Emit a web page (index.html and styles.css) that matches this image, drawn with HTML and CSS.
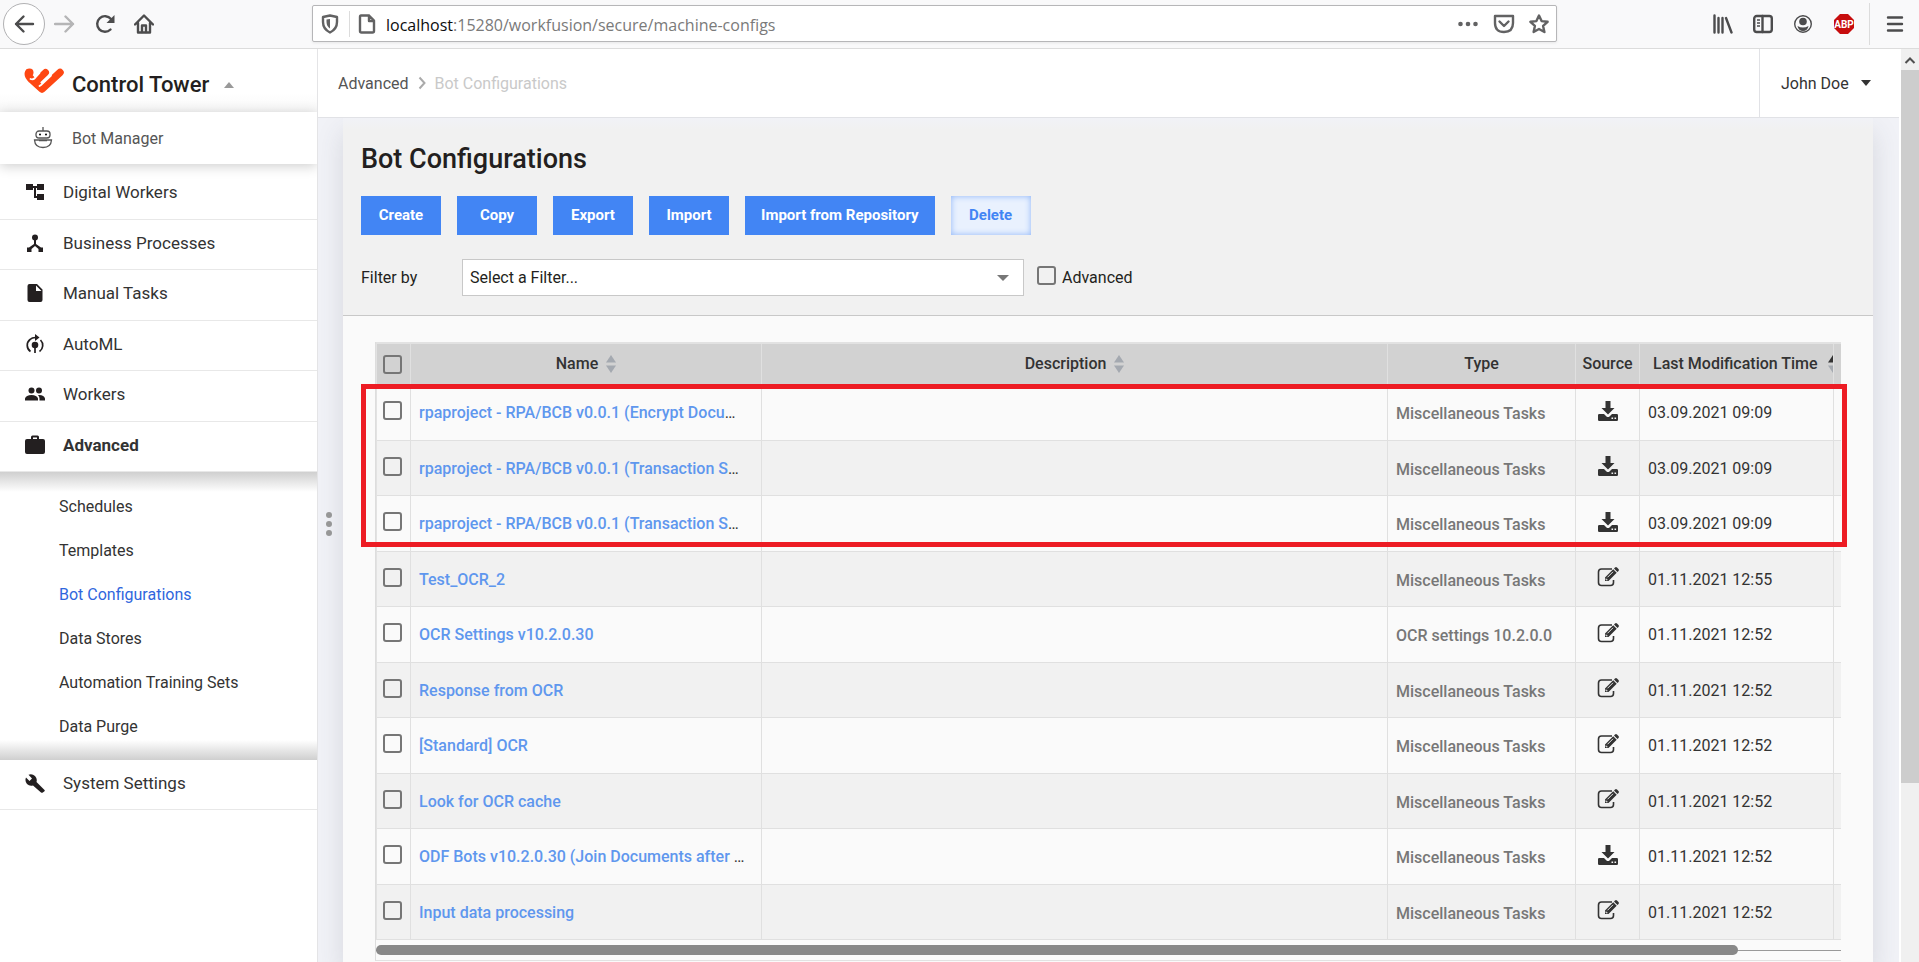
FILE: index.html
```html
<!DOCTYPE html>
<html lang="en">
<head>
<meta charset="utf-8">
<title>Bot Configurations</title>
<link rel="stylesheet" href="styles.css">
</head>
<body>
<svg class="defs" aria-hidden="true">
  <symbol id="i-import" viewBox="0 0 20 20"><path d="M7.500 0h5v7h4L10 13.500 3.500 7h4zM1.200 13H6l2.500 2.500q1.500 1.200 3 0L14 13h4.800q1.200 0 1.200 1.200v4.600q0 1.200-1.200 1.200H1.200Q0 20 0 18.800v-4.600Q0 13 1.200 13zM13.500 16.500v1.600h1.600v-1.600zm3 0v1.600h1.600v-1.600z" fill="currentColor" fill-rule="evenodd"/></symbol>
  <symbol id="i-edit" viewBox="0 0 22 20"><path d="M15 2H4.500Q1.500 2 1.500 5v10.500q0 3 3 3h9q3 0 3-3V13" fill="none" stroke="currentColor" stroke-width="1.600"/><path d="M8 10.500 16.200 2.300l3.500 3.500L11.500 14H8zM17 1.500l1-1q1-.8 2 0l1.500 1.500q.8 1 0 2l-1 1z" fill="currentColor"/><path d="m10.500 10.300 5.500-5.500M9 11.500v1.300h1.500" stroke="#fafafa" fill="none" stroke-width=".9"/></symbol>
  <symbol id="i-sort" viewBox="0 0 10 18"><path d="M5 0l5 7.500H0z" fill="currentColor"/><path d="M5 18l5-7.500H0z" fill="#a4a9b0"/></symbol>
</svg>

<header class="browser">
  <div class="nav-buttons">
    <button class="round" aria-label="Back"><svg width="22" height="20" viewBox="0 0 22 20"><path d="M20 10H3M10.500 2.500 3 10l7.500 7.500" class="ln"/></svg></button>
    <button class="dim" aria-label="Forward"><svg width="22" height="20" viewBox="0 0 22 20"><path d="M1 10h18M11.500 2.500 19 10l-7.500 7.500" class="ln"/></svg></button>
    <button aria-label="Reload"><svg width="20" height="20" viewBox="0 0 20 20"><path d="M15.500 15.500A7.800 7.800 0 1 1 16 5" class="ln"/><path d="M19.500 1v8H11.500z" fill="currentColor"/></svg></button>
    <button aria-label="Home"><svg width="20" height="20" viewBox="0 0 20 20"><path d="M1 10.500 10 1.500l9 9M4 9v9.500h12V9" class="ln"/><path d="M8 18v-6.500h4V18" class="ln"/></svg></button>
  </div>
  <div class="urlbar">
    <svg width="18" height="20" viewBox="0 0 18 20"><path d="M9 1.500 16 3v5q0 7-7 10.500Q2 15 2 8V3z" class="ln"/><path d="M9 5v9.500Q5.500 12 5.500 8V5.500z" fill="currentColor"/></svg>
    <span class="url-sep"></span>
    <svg width="18" height="20" viewBox="0 0 18 20"><path d="M3 1.500h8l5 5v10.500q0 1.500-1.500 1.500H3.500Q2 18.500 2 17V3q0-1.500 1-1.500zM11 1.500V7h5" class="ln"/></svg>
    <div class="url"><b>localhost</b>:15280/workfusion/secure/machine-configs</div>
    <svg width="22" height="20" viewBox="0 0 22 20" fill="currentColor"><circle cx="3.500" cy="10" r="2.300"/><circle cx="11" cy="10" r="2.300"/><circle cx="18.500" cy="10" r="2.300"/></svg>
    <svg width="22" height="20" viewBox="0 0 22 20"><path d="M2 2h18v7q0 9-9 9t-9-9zM6.500 7.500 11 12l4.500-4.500" class="ln"/></svg>
    <svg width="20" height="20" viewBox="0 0 20 20"><path d="m10 1.500 2.600 5.600 6 .7-4.500 4.100 1.300 6.100-5.400-3-5.400 3 1.300-6.100L1.400 7.800l6-.7z" class="ln"/></svg>
  </div>
  <div class="tools">
    <button aria-label="Library"><svg width="20" height="20" viewBox="0 0 20 20"><path d="M1.500 1.500v17M5.500 4v14.500M9.500 4v14.500M13 4l5.500 14.500" class="ln"/></svg></button>
    <button aria-label="Sidebars"><svg width="20" height="20" viewBox="0 0 20 20"><rect x="1.200" y="2" width="17.600" height="16" rx="2.500" class="ln"/><path d="M9.500 2v16" class="ln"/><path d="M4 6h3M4 9h3M4 12h3" stroke="currentColor" stroke-width="1.300"/></svg></button>
    <button aria-label="Account"><svg width="20" height="20" viewBox="0 0 20 20"><circle cx="10" cy="10" r="8.300" fill="none" stroke="currentColor" stroke-width="1.400"/><circle cx="10" cy="7.500" r="3.800" fill="currentColor"/><path d="M4.500 12q5.500 3 11 0-1 5-5.500 5t-5.500-5z" fill="currentColor"/></svg></button>
    <button aria-label="Adblock Plus"><svg width="22" height="20" viewBox="0 0 22 20"><path d="M7 0h8l6 6v8l-6 6H7l-6-6V6z" fill="#c70d0d"/><text x="11" y="14" text-anchor="middle" class="abp">ABP</text></svg></button>
    <span class="tool-sep"></span>
    <button aria-label="Menu"><svg width="18" height="20" viewBox="0 0 18 20"><path d="M2 3.500h14M2 10h14M2 16.500h14" class="ln"/></svg></button>
  </div>
</header>

<div class="app">
  <aside class="sidebar">
    <div class="brand">
      <svg width="41" height="27" viewBox="0 0 41 27"><g stroke="#fe4713" stroke-linecap="round" stroke-linejoin="round" fill="none"><path d="M4.500 5Q3.500 7.500 7.500 11.500L18 21 36 4.500" stroke-width="7.500"/><path d="M11.500 14 21.500 4.500" stroke-width="7"/></g><circle cx="5.500" cy="4.500" r="4" fill="#fe4713"/><path d="M6.500 11q2.500 1 4.500-1l4.500-5M15.500 18l1.500-1 10-9.500" fill="none" stroke="#fff" stroke-width="1.800" stroke-linecap="round"/></svg>
      <h2>Control Tower</h2>
      <span class="tri-up"></span>
    </div>
    <a class="bot-manager" href="#">
      <svg width="20" height="22" viewBox="0 0 20 22"><g fill="none" stroke="#555" stroke-width="1.300"><path d="M10 0v4"/><rect x="3" y="4" width="14" height="7" rx="3"/><path d="M6 13.500h8M1.500 13h17q-.5 7.500-8.500 7.500T1.500 13z"/></g><circle cx="7" cy="7.500" r="1"/><circle cx="13" cy="7.500" r="1"/></svg>
      Bot Manager
    </a>
    <nav class="menu">
      <a href="#"><svg viewBox="0 0 20 20"><path d="M1 2h7v6H1zM12 2h7v6h-7zM12 12h7v6h-7zM8 4h4v2H8zM9 5h2v9h2v2H9z"/></svg>Digital Workers</a>
      <a href="#"><svg viewBox="0 0 20 20"><circle cx="10" cy="4.500" r="3"/><path d="M9 6h2v5l5 3.500h2V19h-4.500v-3L10 13l-3.500 3v3H2v-4.500h2L9 11z"/></svg>Business Processes</a>
      <a href="#"><svg viewBox="0 0 20 20"><path d="M4.500 1H12l5.500 5.500V17q0 2-2 2h-11q-2 0-2-2V3q0-2 2-2zM11 2.500V8h5.500z" fill-rule="evenodd"/></svg>Manual Tasks</a>
      <a href="#"><svg viewBox="0 0 20 20"><circle cx="10" cy="11" r="3.300"/><path d="M10 12v7M5.500 17.500A7.500 7.500 0 0 1 5 5.500Q7 3.500 10.500 3.500M14.500 17.500A7.500 7.500 0 0 0 15.500 6" fill="none" stroke="currentColor" stroke-width="1.700"/><path d="M10 0l4.500 3.500L10 7z"/></svg>AutoML</a>
      <a href="#"><svg viewBox="0 0 20 20"><circle cx="6.500" cy="6.500" r="3"/><circle cx="14" cy="6.500" r="3"/><path d="M0 16.500v-2q1-3.500 6.500-3.500t6.500 3.500v2zM14.500 16.500v-2q0-2-1.500-3.500 6-.5 7 3.500v2z"/></svg>Workers</a>
      <a href="#" class="active"><svg viewBox="0 0 20 20"><path d="M6 4V2q0-1.500 1.500-1.500h5Q14 .500 14 2v2h4q2 0 2 2v11q0 2-2 2H2q-2 0-2-2V6q0-2 2-2zM8 4h4V2.500H8z" fill-rule="evenodd"/></svg>Advanced</a>
      <div class="submenu">
        <a href="#">Schedules</a>
        <a href="#">Templates</a>
        <a href="#" class="current">Bot Configurations</a>
        <a href="#">Data Stores</a>
        <a href="#">Automation Training Sets</a>
        <a href="#">Data Purge</a>
      </div>
      <a href="#"><svg viewBox="0 0 20 20"><path d="m19.500 17-8-8q1-3.500-1.500-6Q7 .300 3.500 1.800L7 5.500 4.500 8 1 4.500Q-.5 8 2 11q2.500 2.500 6 1.500l8 7q1 .7 1.800 0l1.700-1.300q.6-.6 0-1.200z"/></svg>System Settings</a>
    </nav>
  </aside>

  <main class="main">
    <div class="topbar">
      <div class="crumbs"><a href="#">Advanced</a><svg width="8" height="14" viewBox="0 0 8 14"><path d="m1.500 1.500 5 5.500-5 5.500" fill="none" stroke="#aaa" stroke-width="2"/></svg><span>Bot Configurations</span></div>
      <button class="user">John Doe<span class="tri-down"></span></button>
    </div>
    <div class="body">
      <div class="handle"><i></i><i></i><i></i></div>
      <section class="card">
        <div class="card-head">
          <h1>Bot Configurations</h1>
          <div class="actions">
            <button>Create</button><button>Copy</button><button>Export</button><button>Import</button><button>Import from Repository</button><button class="light">Delete</button>
          </div>
          <div class="filter">
            <label for="filter">Filter by</label>
            <div class="select"><select id="filter"><option>Select a Filter...</option></select><span class="tri-down"></span></div>
            <label class="adv"><input type="checkbox">Advanced</label>
          </div>
        </div>
        <div class="card-body">
          <div class="grid">
            <table>
              <colgroup><col class="c-check"><col class="c-name"><col><col class="c-type"><col class="c-source"><col class="c-time"><col class="c-rest"></colgroup>
              <thead><tr><th><input type="checkbox" aria-label="Select all"></th><th>Name<svg class="sort"><use href="#i-sort"/></svg></th><th>Description<svg class="sort"><use href="#i-sort"/></svg></th><th>Type</th><th>Source</th><th class="time">Last Modification Time<svg class="sort asc"><use href="#i-sort"/></svg></th><th></th></tr></thead>
              <tbody>
                <tr><td><input type="checkbox" aria-label="Select row"></td><td><a href="#">rpaproject - RPA/BCB v0.0.1 (Encrypt Docu</a>…</td><td></td><td class="type">Miscellaneous Tasks</td><td><svg class="src"><use href="#i-import"/></svg></td><td>03.09.2021 09:09</td><td></td></tr>
                <tr><td><input type="checkbox" aria-label="Select row"></td><td><a href="#">rpaproject - RPA/BCB v0.0.1 (Transaction S</a>…</td><td></td><td class="type">Miscellaneous Tasks</td><td><svg class="src"><use href="#i-import"/></svg></td><td>03.09.2021 09:09</td><td></td></tr>
                <tr><td><input type="checkbox" aria-label="Select row"></td><td><a href="#">rpaproject - RPA/BCB v0.0.1 (Transaction S</a>…</td><td></td><td class="type">Miscellaneous Tasks</td><td><svg class="src"><use href="#i-import"/></svg></td><td>03.09.2021 09:09</td><td></td></tr>
                <tr><td><input type="checkbox" aria-label="Select row"></td><td><a href="#">Test_OCR_2</a></td><td></td><td class="type">Miscellaneous Tasks</td><td><svg class="src edit"><use href="#i-edit"/></svg></td><td>01.11.2021 12:55</td><td></td></tr>
                <tr><td><input type="checkbox" aria-label="Select row"></td><td><a href="#">OCR Settings v10.2.0.30</a></td><td></td><td class="type">OCR settings 10.2.0.0</td><td><svg class="src edit"><use href="#i-edit"/></svg></td><td>01.11.2021 12:52</td><td></td></tr>
                <tr><td><input type="checkbox" aria-label="Select row"></td><td><a href="#">Response from OCR</a></td><td></td><td class="type">Miscellaneous Tasks</td><td><svg class="src edit"><use href="#i-edit"/></svg></td><td>01.11.2021 12:52</td><td></td></tr>
                <tr><td><input type="checkbox" aria-label="Select row"></td><td><a href="#">[Standard] OCR</a></td><td></td><td class="type">Miscellaneous Tasks</td><td><svg class="src edit"><use href="#i-edit"/></svg></td><td>01.11.2021 12:52</td><td></td></tr>
                <tr><td><input type="checkbox" aria-label="Select row"></td><td><a href="#">Look for OCR cache</a></td><td></td><td class="type">Miscellaneous Tasks</td><td><svg class="src edit"><use href="#i-edit"/></svg></td><td>01.11.2021 12:52</td><td></td></tr>
                <tr><td><input type="checkbox" aria-label="Select row"></td><td><a href="#">ODF Bots v10.2.0.30 (Join Documents after </a>…</td><td></td><td class="type">Miscellaneous Tasks</td><td><svg class="src"><use href="#i-import"/></svg></td><td>01.11.2021 12:52</td><td></td></tr>
                <tr><td><input type="checkbox" aria-label="Select row"></td><td><a href="#">Input data processing</a></td><td></td><td class="type">Miscellaneous Tasks</td><td><svg class="src edit"><use href="#i-edit"/></svg></td><td>01.11.2021 12:52</td><td></td></tr>
              </tbody>
            </table>
            <div class="hscroll"><span></span></div>
            <div class="highlight"></div>
          </div>
        </div>
      </section>
    </div>
  </main>

  <div class="vscroll"><div class="up"><svg width="12" height="8" viewBox="0 0 12 8"><path d="m1.500 7 4.500-4.500L10.500 7" fill="none" stroke="#505050" stroke-width="2"/></svg></div><div class="thumb"></div></div>
</div>
</body>
</html>
```
FILE: styles.css
```css
* { box-sizing: border-box; }
body {
  margin: 0;
  height: 100vh;
  overflow: hidden;
  display: flex;
  flex-direction: column;
  font-family: Roboto, "Liberation Sans", sans-serif;
  font-size: 16px;
  color: #231f20;
  background: #fff;
}
a { color: inherit; text-decoration: none; }
button { font: inherit; color: inherit; border: 0; background: none; padding: 0; }
h1, h2 { margin: 0; font-weight: 500; }
svg { flex: none; display: block; }
.defs { position: absolute; width: 0; height: 0; }
.ln { fill: none; stroke: currentColor; stroke-width: 2.4; stroke-linecap: round; stroke-linejoin: round; }

/* browser chrome */
.browser {
  flex: none;
  height: 49px;
  display: flex;
  align-items: center;
  background: #f9f9fa;
  border-bottom: 1px solid #dcdcdc;
  color: #4c4c4d;
  padding: 0 15px 1px 3px;
}
.nav-buttons { display: flex; align-items: center; gap: 19px; width: 309px; }
.nav-buttons .round {
  width: 42px; height: 42px;
  border: 1px solid #b1b1b3; border-radius: 50%;
  background: #fff;
  display: grid; place-items: center;
  margin-right: -10px;
}
.nav-buttons .dim { color: #b5b5b6; }
.urlbar {
  flex: 1;
  height: 37px;
  display: flex;
  align-items: center;
  gap: 14px;
  padding: 0 7px 0 8px;
  background: #fff;
  border: 1px solid #b6b6b8;
  border-radius: 2px;
  color: #626263;
  box-shadow: 0 1px 3px rgba(0, 0, 0, .08);
}
.url-sep { width: 1px; height: 26px; background: #dcdcdc; margin: 0 -6px 0 -4px; }
.url { flex: 1; padding-top: 2px; font-family: "Open Sans", sans-serif; color: #7a7a7a; margin-left: -4px; }
.url b { font-weight: 400; color: #0c0c0d; }
.tools { display: flex; align-items: center; justify-content: flex-end; gap: 20px; width: 347px; }
.tool-sep { width: 1px; height: 42px; background: #dcdcdc; margin: 0 -4px 0 -6px; }
.abp { font: 700 10px Roboto, sans-serif; fill: #fff; }

/* layout */
.app { flex: 1; min-height: 0; display: flex; }
.sidebar { flex: none; width: 318px; border-right: 1px solid #e4e4e6; overflow: hidden; }
.main { flex: 1; min-width: 0; display: flex; flex-direction: column; }

.brand {
  height: 63px;
  display: flex;
  align-items: center;
  padding: 8px 0 0 24px;
  background: linear-gradient(#fff 70%, #f8f8f8);
}
.brand svg { margin-bottom: 6px; }
.brand h2 { font-size: 22px; margin: 0 15px 0 7px; }
.tri-up { border: 5px solid transparent; border-top: 0; border-bottom: 6px solid #999; }
.tri-down { border: 5px solid transparent; border-bottom: 0; border-top: 6px solid #333; }
.bot-manager {
  height: 52px;
  display: flex;
  align-items: center;
  gap: 19px;
  padding-left: 33px;
  color: #555;
  box-shadow: 0 2px 12px rgba(0, 0, 0, .2);
}
.menu { padding-top: 5px; }
.menu > a {
  height: 51px;
  display: flex;
  align-items: center;
  gap: 18px;
  padding: 0 0 4px 25px;
  font-size: 17px;
  color: #333;
  border-bottom: 1px solid #e8e8e8;
}
.menu > a:nth-child(even) { height: 50px; }
.menu > a svg { width: 20px; height: 20px; color: #231f20; fill: currentColor; }
.menu > .active { font-weight: 700; }
.submenu {
  padding: 12px 0;
  display: flex;
  flex-direction: column;
  background: linear-gradient(#cfcfcf, #fff 20px, #fff calc(100% - 20px), #cfcfcf);
}
.submenu a { height: 44px; display: flex; align-items: center; padding-left: 59px; color: #333; }
.submenu .current { color: #2f66dd; }

.topbar {
  flex: none;
  height: 69px;
  display: flex;
  justify-content: space-between;
  border-bottom: 1px solid #e1e2e6;
  background: #fff;
}
.crumbs { display: flex; align-items: center; gap: 9px; padding-left: 20px; color: #555; }
.crumbs span { color: #c9c9c9; }
.user { display: flex; align-items: center; gap: 12px; width: 140px; padding-left: 21px; border-left: 1px solid #e1e2e6; color: #333; }

.body { flex: 1; min-height: 0; display: flex; padding-right: 26px; background: #f1f2f7; overflow: hidden; }
.handle { flex: none; width: 25px; display: flex; flex-direction: column; align-items: center; gap: 3px; padding: 394px 4px 0 0; }
.handle i { width: 6px; height: 6px; border-radius: 50%; background: #999; }
.card { flex: 1; min-width: 0; background: #fafafa; box-shadow: 0 14px 26px rgba(60, 65, 80, .15); }
.card-head { height: 198px; padding: 23px 18px 0; background: linear-gradient(#f1f2f7, #f1f1f1 12px); border-bottom: 1px solid #c8c8c8; }
.card-head h1 { font-size: 27px; line-height: 36px; }
.actions { display: flex; gap: 16px; margin-top: 19px; }
.actions button { height: 39px; min-width: 80px; padding: 0 16px 2px; background: #4285f4; color: #fff; font-weight: 700; font-size: 15px; }
.actions .light { background: #e9f1fe; color: #4285f4; box-shadow: inset 0 0 6px #8db4f8; }
.filter { display: flex; align-items: center; margin-top: 24px; }
.filter > label:first-child { width: 101px; }
.select { position: relative; width: 562px; height: 37px; }
.select select { appearance: none; width: 100%; height: 100%; padding: 0 7px; font: inherit; color: #231f20; background: #fff; border: 1px solid #c8c8c8; border-radius: 0; }
.select .tri-down { position: absolute; right: 15px; top: 16px; border-width: 6px 6px 0; border-top-color: #777; }
.adv { display: flex; align-items: center; gap: 6px; margin-left: 13px; }
input[type="checkbox"] { appearance: none; display: block; width: 19px; height: 19px; margin: 0; border: 2px solid #767676; border-radius: 3px; }
.adv input[type="checkbox"], td input[type="checkbox"] { margin-bottom: 4px; }

.card-body { padding: 26px 32px 0; }
.grid { position: relative; border-left: 1px solid #ddd; border-bottom: 1px solid #e2e2e2; }
table { width: 100%; table-layout: fixed; border-collapse: separate; border-spacing: 0; border-top: 2px solid #e2e2e2; border-left: 1px solid #e2e2e2; }
.c-check { width: 34px; }
.c-name { width: 351px; }
.c-type { width: 188px; }
.c-source { width: 64px; }
.c-time { width: 194px; }
.c-rest { width: 7px; }
th, td { padding: 0 8px; border-right: 1px solid #e0e0e0; white-space: nowrap; overflow: hidden; }
th { height: 41px; padding-bottom: 2px; background: #d2d2d2; font-weight: 500; color: #333; }
th:first-child, td:first-child { padding: 0 0 0 6px; }
th:last-child, td:last-child { padding: 0; border-right: 0; }
th .sort { display: inline-block; vertical-align: middle; width: 10px; height: 18px; margin-left: 8px; color: #a4a9b0; }
th:nth-child(5) { padding: 0 0 2px; }
th.time { padding: 0 0 2px 13px; text-align: left; }
th .asc { margin-left: 10px; color: #333; }
td { height: 56px; border-bottom: 1px solid #e0e0e0; color: #333; }
tr:nth-child(even) td { height: 55px; background: #f1f1f1; }
td a { color: #5f97ee; font-weight: 500; }
td.type { padding-top: 2px; color: #777; font-weight: 500; }
.src { width: 20px; height: 20px; margin: 0 auto 4px; color: #333; }
.src.edit { width: 22px; }
.hscroll { height: 20px; display: flex; align-items: center; background: linear-gradient(#999, #999) center / 100% 1px no-repeat; }
.hscroll span { width: 93%; height: 10px; border-radius: 5px; background: #888; }
.highlight { position: absolute; left: -15px; right: -6px; top: 42px; height: 163px; border: 5px solid #ed1c24; }

.vscroll { flex: none; width: 20px; background: #f0f0f0; border-left: 2px solid #fff; }
.up { height: 21px; display: grid; place-items: center; }
.thumb { height: 713px; background: #cdcdcd; }
```
